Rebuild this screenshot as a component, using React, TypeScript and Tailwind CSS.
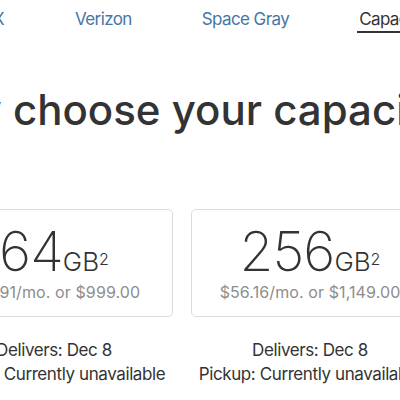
import React from 'react';

const font = { fontFamily: 'Inter, "Liberation Sans", sans-serif' };

function Card({ size, price }: { size: string; price: string }) {
  return (
    <div className="flex w-[238px] shrink-0 flex-col items-center">
      <div className="flex h-[108px] w-full flex-col items-center rounded-[5px] border border-[#dcdcdc] pt-[14px]">
        <div className="flex items-baseline leading-none text-[#333]">
          <span className="text-[55px] font-extralight tracking-[-1px]">{size}</span>
          <span className="text-[26px] font-light">GB</span>
          <span className="mt-[27px] self-start text-[16px] font-light">2</span>
        </div>
        <div className="mt-[1px] whitespace-nowrap text-[16px] leading-[24px] tracking-[0.1px] text-[#8d8d8d]">{price}</div>
      </div>
      <div className="mt-[21px] whitespace-nowrap text-[17px] leading-[24px] tracking-[-0.4px] text-[#333]">Delivers: Dec 8</div>
      <div className="whitespace-nowrap text-[17px] leading-[24px] tracking-[-0.4px] text-[#333]">Pickup: Currently unavailable</div>
    </div>
  );
}

export default function App() {
  return (
    <div className="h-[400px] w-[400px] overflow-hidden bg-white" style={font}>
      <nav className="flex items-start whitespace-nowrap pt-[9px] text-[17px] leading-[20px] tracking-[-0.6px]">
        <div className="flex w-[4px] shrink-0 justify-end">
          <span className="shrink-0 text-[#4676a5]">iPhone X</span>
        </div>
        <div className="ml-[71px] flex shrink-0 gap-[70px]">
          <span className="text-[#4676a5]">Verizon</span>
          <span className="text-[#4676a5]">Space Gray</span>
          <span className="-ml-[2px] border-b-2 border-[#333] px-[2px] pb-[2px] text-[#333]">Capacity</span>
        </div>
      </nav>
      <h1 className="mt-[53px] flex whitespace-nowrap text-[42px] font-medium leading-[48px] text-[#333]">
        <span className="flex w-[13px] shrink-0 justify-end">
          <span className="shrink-0">Now&nbsp;</span>
        </span>
        <span className="shrink-0">choose your capacity.</span>
      </h1>
      <div className="mt-[75px] ml-[-65px] flex gap-[18px]">
        <Card size="64" price="$41.91/mo. or $999.00" />
        <Card size="256" price="$56.16/mo. or $1,149.00" />
      </div>
    </div>
  );
}
